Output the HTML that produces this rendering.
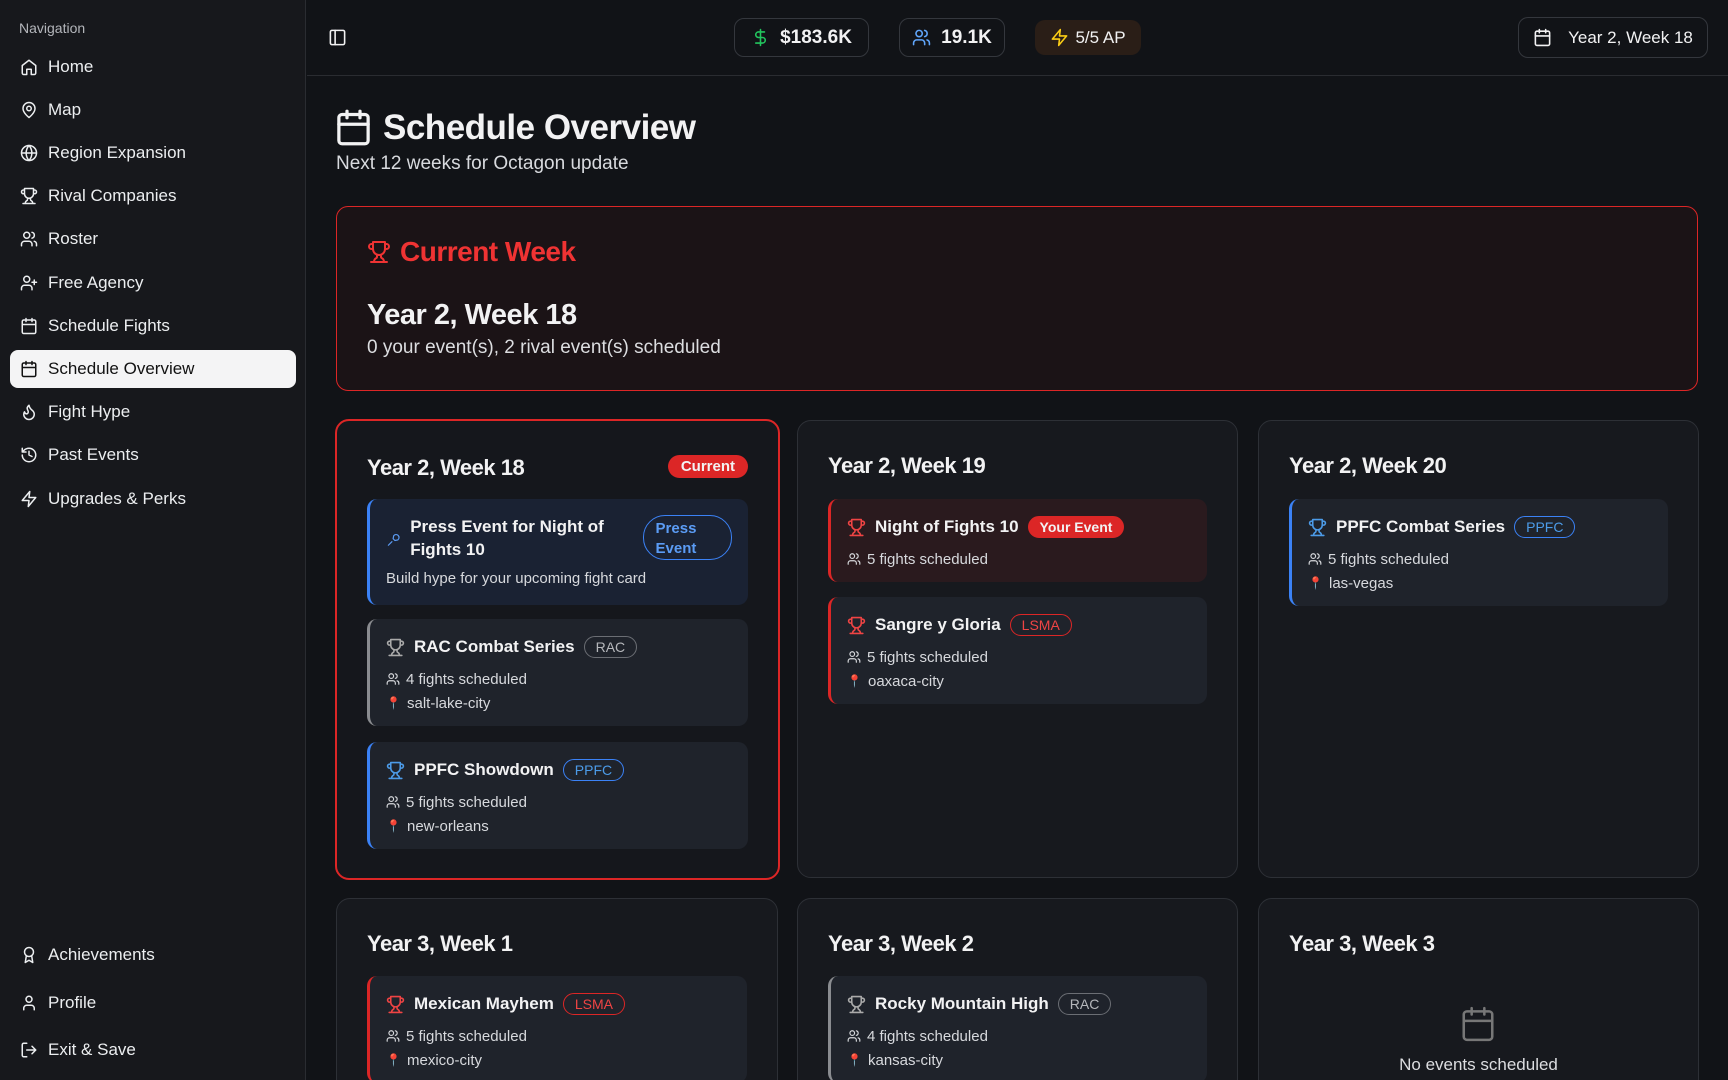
<!DOCTYPE html>
<html style="width:1728px;height:1080px;overflow:hidden"><head><meta charset="utf-8"><style>
*{box-sizing:border-box;margin:0;padding:0}
body{width:1728px;height:1080px;overflow:hidden;background:#111317;font-family:"Liberation Sans",sans-serif;color:#f2f2f3;position:relative}
svg{fill:none;stroke:currentColor;stroke-width:2;stroke-linecap:round;stroke-linejoin:round}
.side{position:absolute;left:0;top:0;width:306px;height:1080px;background:#17181c;border-right:1px solid #2a2c31}
.navlbl{position:absolute;left:19px;top:20px;font-size:14px;color:#b4b6bb}
.ni{position:absolute;left:10px;width:286px;height:38px;display:flex;align-items:center;padding-left:10px;font-size:17px;color:#eceef0}
.ni svg{width:18px;height:18px;margin-right:10px}
.ni.act{background:#f4f4f5;color:#111;border-radius:8px}
.hdr{position:absolute;left:307px;top:0;right:0;height:76px;border-bottom:1px solid #2a2c31}
.pill{position:absolute;top:18px;height:39px;border:1px solid #34373d;border-radius:10px;display:flex;align-items:center;justify-content:center;font-size:19px;font-weight:bold}
.pill svg{width:19px;height:19px;margin-right:10px}
.card{position:absolute;background:#17191e;border:1px solid #2d3036;border-radius:14px;overflow:hidden}
.card h3{position:absolute;left:30px;top:32px;font-size:22px;font-weight:bold;letter-spacing:-.5px}
.item{position:absolute;left:30px;right:30px;background:#1f232b;border-radius:10px;border-left:3px solid #888;padding:16px 16px 11px 16px}
.tr{display:flex;align-items:center;height:24px;font-size:17px;font-weight:bold}
.tr svg{width:19px;height:19px;margin-right:9px}
.b{border:1.5px solid;border-radius:14px;padding:2px 11px;font-size:14px;font-weight:normal;margin-left:9px}
.m{display:flex;align-items:center;height:24px;font-size:15px;color:#d7d9dd}
.m svg{width:14px;height:14px;margin-right:6px;stroke-width:2}
.tr+.m{margin-top:8px}
.pin{color:#e53935;font-size:12px;margin-right:7px;width:14px;text-align:center}
</style></head><body>
<div class="side">
<div class="navlbl">Navigation</div>
<div class="ni" style="top:48px"><svg viewBox="0 0 24 24"><path d="M3 10l9-7 9 7v10a2 2 0 0 1-2 2h-4v-7H9v7H5a2 2 0 0 1-2-2z"/></svg>Home</div>
<div class="ni" style="top:91px"><svg viewBox="0 0 24 24"><path d="M20 10c0 6-8 12-8 12S4 16 4 10a8 8 0 0 1 16 0z"/><circle cx="12" cy="10" r="3"/></svg>Map</div>
<div class="ni" style="top:134px"><svg viewBox="0 0 24 24"><circle cx="12" cy="12" r="10"/><path d="M2 12h20M12 2a15 15 0 0 1 0 20a15 15 0 0 1 0-20"/></svg>Region Expansion</div>
<div class="ni" style="top:177px"><svg viewBox="0 0 24 24"><path d="M6 9H4.5a2.5 2.5 0 0 1 0-5H6M18 9h1.5a2.5 2.5 0 0 0 0-5H18M4 22h16M10 14.7V17c0 .6-.5 1-1 1.2C7.9 18.8 7 20.2 7 22M14 14.7V17c0 .6.5 1 1 1.2 1.1.6 2 2 2 3.8M18 2H6v7a6 6 0 0 0 12 0z"/></svg>Rival Companies</div>
<div class="ni" style="top:220px"><svg viewBox="0 0 24 24"><path d="M16 21v-2a4 4 0 0 0-4-4H6a4 4 0 0 0-4 4v2"/><circle cx="9" cy="7" r="4"/><path d="M22 21v-2a4 4 0 0 0-3-3.9M16 3.1a4 4 0 0 1 0 7.8"/></svg>Roster</div>
<div class="ni" style="top:264px"><svg viewBox="0 0 24 24"><path d="M16 21v-2a4 4 0 0 0-4-4H6a4 4 0 0 0-4 4v2"/><circle cx="9" cy="7" r="4"/><path d="M19 8v6M22 11h-6"/></svg>Free Agency</div>
<div class="ni" style="top:307px"><svg viewBox="0 0 24 24"><rect x="3" y="4" width="18" height="18" rx="2"/><path d="M16 2v4M8 2v4M3 10h18"/></svg>Schedule Fights</div>
<div class="ni act" style="top:350px"><svg viewBox="0 0 24 24"><rect x="3" y="4" width="18" height="18" rx="2"/><path d="M16 2v4M8 2v4M3 10h18"/></svg>Schedule Overview</div>
<div class="ni" style="top:393px"><svg viewBox="0 0 24 24"><path d="M8.5 14.5A2.5 2.5 0 0 0 11 12c0-1.4-.5-2-1-3-1-2.1-.2-4.1 2-6 .5 2.5 2 4.9 4 6.5 2 1.600 3 3.5 3 5.5a7 7 0 1 1-14 0c0-1.2.4-2.3 1-3.2.4 1.6 1.2 2.7 2.5 2.7z"/></svg>Fight Hype</div>
<div class="ni" style="top:436px"><svg viewBox="0 0 24 24"><path d="M3 12a9 9 0 1 0 9-9 9.8 9.8 0 0 0-6.7 2.7L3 8M3 3v5h5M12 7v5l4 2"/></svg>Past Events</div>
<div class="ni" style="top:480px"><svg viewBox="0 0 24 24"><path d="M13 2L3 14h9l-1 8 10-12h-9z"/></svg>Upgrades &amp; Perks</div>
<div class="ni" style="top:936px"><svg viewBox="0 0 24 24"><circle cx="12" cy="8" r="6"/><path d="M15.5 12.9L17 22l-5-3-5 3 1.5-9.1"/></svg>Achievements</div>
<div class="ni" style="top:984px"><svg viewBox="0 0 24 24"><path d="M19 21v-2a4 4 0 0 0-4-4H9a4 4 0 0 0-4 4v2"/><circle cx="12" cy="7" r="4"/></svg>Profile</div>
<div class="ni" style="top:1031px"><svg viewBox="0 0 24 24"><path d="M9 21H5a2 2 0 0 1-2-2V5a2 2 0 0 1 2-2h4M16 17l5-5-5-5M21 12H9"/></svg>Exit &amp; Save</div>
</div>

<div class="hdr">
<svg viewBox="0 0 24 24" style="position:absolute;left:21px;top:28px;width:19px;height:19px"><rect x="3" y="3" width="18" height="18" rx="2"/><path d="M9 3v18"/></svg>
<div class="pill" style="left:427px;width:135px"><svg viewBox="0 0 24 24" style="color:#22c55e"><path d="M12 2v20M17 5H9.5a3.5 3.5 0 0 0 0 7h5a3.5 3.5 0 0 1 0 7H6"/></svg>$183.6K</div>
<div class="pill" style="left:592px;width:106px"><svg viewBox="0 0 24 24" style="color:#60a5fa"><path d="M16 21v-2a4 4 0 0 0-4-4H6a4 4 0 0 0-4 4v2"/><circle cx="9" cy="7" r="4"/><path d="M22 21v-2a4 4 0 0 0-3-3.9M16 3.1a4 4 0 0 1 0 7.8"/></svg>19.1K</div>
<div class="pill" style="left:728px;width:106px;border:none;background:#2a1e17;font-weight:normal;font-size:17px;height:35px;top:20px"><svg viewBox="0 0 24 24" style="color:#facc15;margin-right:6px"><path d="M13 2L3 14h9l-1 8 10-12h-9z"/></svg>5/5 AP</div>
<div class="pill" style="left:1211px;width:190px;top:17px;height:41px;font-weight:normal;font-size:17px"><svg viewBox="0 0 24 24" style="margin-right:16px"><rect x="3" y="4" width="18" height="18" rx="2"/><path d="M16 2v4M8 2v4M3 10h18"/></svg>Year 2, Week 18</div>
</div>

<svg viewBox="0 0 24 24" style="position:absolute;left:334px;top:108px;width:39px;height:39px"><rect x="3" y="4" width="18" height="18" rx="2"/><path d="M16 2v4M8 2v4M3 10h18"/></svg>
<div style="position:absolute;left:383px;top:108px;font-size:35px;font-weight:bold;letter-spacing:-.5px">Schedule Overview</div>
<div style="position:absolute;left:336px;top:153px;font-size:19px;color:#d8dade">Next 12 weeks for Octagon update</div>

<div style="position:absolute;left:336px;top:206px;width:1362px;height:185px;border:1.5px solid #dc2626;border-radius:12px;background:#1b1316">
<svg viewBox="0 0 24 24" style="position:absolute;left:30px;top:33px;width:24px;height:24px;color:#ef3333"><path d="M6 9H4.5a2.5 2.5 0 0 1 0-5H6M18 9h1.5a2.5 2.5 0 0 0 0-5H18M4 22h16M10 14.7V17c0 .6-.5 1-1 1.2C7.9 18.8 7 20.2 7 22M14 14.7V17c0 .6.5 1 1 1.2 1.1.6 2 2 2 3.8M18 2H6v7a6 6 0 0 0 12 0z"/></svg>
<div style="position:absolute;left:63px;top:29px;font-size:28px;font-weight:bold;color:#ef3333;letter-spacing:-.5px">Current Week</div>
<div style="position:absolute;left:30px;top:92px;font-size:29px;font-weight:bold;letter-spacing:-.5px">Year 2, Week 18</div>
<div style="position:absolute;left:30px;top:130px;font-size:19px;color:#dcdde0">0 your event(s), 2 rival event(s) scheduled</div>
</div>

<!-- Row 1 -->
<div class="card" style="left:335px;top:419px;width:445px;height:461px;border:2px solid #dc2626;background:#15171c">
<h3 style="left:30px;top:34px">Year 2, Week 18</h3>
<div style="position:absolute;right:30px;top:34px;background:#dc2626;border-radius:13px;padding:3px 13px;font-size:15px;font-weight:bold">Current</div>
<div class="item" style="top:78px;height:106px;border-left-color:#3b82f6;background:#1a2233">
 <div style="display:flex;align-items:flex-start">
  <svg viewBox="0 0 24 24" style="width:15px;height:15px;color:#5b9cf5;margin-top:18px;margin-right:10px"><path d="M4 20l6-6M13 4a5 5 0 1 1 7 7l-5 1-3-3z"/></svg>
  <div style="font-size:17px;font-weight:bold;line-height:23px;width:220px;margin-top:0px">Press Event for Night of Fights 10</div>
  <div style="margin-left:24px;margin-top:0px;border:1.5px solid #3b82f6;color:#5b9cf5;border-radius:22px;width:93px;height:45px;padding:3px 12px;font-size:15px;font-weight:bold;line-height:20px">Press Event</div>
 </div>
 <div style="font-size:15px;color:#d7d9dd;margin-top:9px">Build hype for your upcoming fight card</div>
</div>
<div class="item" style="top:198px;border-left-color:#8a8c90"><div class="tr"><svg viewBox="0 0 24 24" style="color:#aaa"><path d="M6 9H4.5a2.5 2.5 0 0 1 0-5H6M18 9h1.5a2.5 2.5 0 0 0 0-5H18M4 22h16M10 14.7V17c0 .6-.5 1-1 1.2C7.9 18.8 7 20.2 7 22M14 14.7V17c0 .6.5 1 1 1.2 1.1.6 2 2 2 3.8M18 2H6v7a6 6 0 0 0 12 0z"/></svg>RAC Combat Series<span class="b" style="color:#b5b7bb;border-color:#6b6e74">RAC</span></div>
<div class="m"><svg viewBox="0 0 24 24"><path d="M16 21v-2a4 4 0 0 0-4-4H6a4 4 0 0 0-4 4v2"/><circle cx="9" cy="7" r="4"/><path d="M22 21v-2a4 4 0 0 0-3-3.9M16 3.1a4 4 0 0 1 0 7.8"/></svg>4 fights scheduled</div>
<div class="m"><span class="pin">📍</span>salt-lake-city</div></div>
<div class="item" style="top:321px;border-left-color:#3b82f6"><div class="tr"><svg viewBox="0 0 24 24" style="color:#4c9be8"><path d="M6 9H4.5a2.5 2.5 0 0 1 0-5H6M18 9h1.5a2.5 2.5 0 0 0 0-5H18M4 22h16M10 14.7V17c0 .6-.5 1-1 1.2C7.9 18.8 7 20.2 7 22M14 14.7V17c0 .6.5 1 1 1.2 1.1.6 2 2 2 3.8M18 2H6v7a6 6 0 0 0 12 0z"/></svg>PPFC Showdown<span class="b" style="color:#4c9be8;border-color:#3b82f6">PPFC</span></div>
<div class="m"><svg viewBox="0 0 24 24"><path d="M16 21v-2a4 4 0 0 0-4-4H6a4 4 0 0 0-4 4v2"/><circle cx="9" cy="7" r="4"/><path d="M22 21v-2a4 4 0 0 0-3-3.9M16 3.1a4 4 0 0 1 0 7.8"/></svg>5 fights scheduled</div>
<div class="m"><span class="pin">📍</span>new-orleans</div></div>
</div>

<div class="card" style="left:797px;top:420px;width:441px;height:458px">
<h3>Year 2, Week 19</h3>
<div class="item" style="top:78px;border-left-color:#dc2626;background:#2a1a1e"><div class="tr"><svg viewBox="0 0 24 24" style="color:#ef4444"><path d="M6 9H4.5a2.5 2.5 0 0 1 0-5H6M18 9h1.5a2.5 2.5 0 0 0 0-5H18M4 22h16M10 14.7V17c0 .6-.5 1-1 1.2C7.9 18.8 7 20.2 7 22M14 14.7V17c0 .6.5 1 1 1.2 1.1.6 2 2 2 3.8M18 2H6v7a6 6 0 0 0 12 0z"/></svg>Night of Fights 10<span class="b" style="background:#dc2626;border-color:#dc2626;font-weight:bold">Your Event</span></div>
<div class="m"><svg viewBox="0 0 24 24"><path d="M16 21v-2a4 4 0 0 0-4-4H6a4 4 0 0 0-4 4v2"/><circle cx="9" cy="7" r="4"/><path d="M22 21v-2a4 4 0 0 0-3-3.9M16 3.1a4 4 0 0 1 0 7.8"/></svg>5 fights scheduled</div></div>
<div class="item" style="top:176px;border-left-color:#dc2626"><div class="tr"><svg viewBox="0 0 24 24" style="color:#ef4444"><path d="M6 9H4.5a2.5 2.5 0 0 1 0-5H6M18 9h1.5a2.5 2.5 0 0 0 0-5H18M4 22h16M10 14.7V17c0 .6-.5 1-1 1.2C7.9 18.8 7 20.2 7 22M14 14.7V17c0 .6.5 1 1 1.2 1.1.6 2 2 2 3.8M18 2H6v7a6 6 0 0 0 12 0z"/></svg>Sangre y Gloria<span class="b" style="color:#ef4444;border-color:#dc2626">LSMA</span></div>
<div class="m"><svg viewBox="0 0 24 24"><path d="M16 21v-2a4 4 0 0 0-4-4H6a4 4 0 0 0-4 4v2"/><circle cx="9" cy="7" r="4"/><path d="M22 21v-2a4 4 0 0 0-3-3.9M16 3.1a4 4 0 0 1 0 7.8"/></svg>5 fights scheduled</div>
<div class="m"><span class="pin">📍</span>oaxaca-city</div></div>
</div>

<div class="card" style="left:1258px;top:420px;width:441px;height:458px">
<h3>Year 2, Week 20</h3>
<div class="item" style="top:78px;border-left-color:#3b82f6"><div class="tr"><svg viewBox="0 0 24 24" style="color:#4c9be8"><path d="M6 9H4.5a2.5 2.5 0 0 1 0-5H6M18 9h1.5a2.5 2.5 0 0 0 0-5H18M4 22h16M10 14.7V17c0 .6-.5 1-1 1.2C7.9 18.8 7 20.2 7 22M14 14.7V17c0 .6.5 1 1 1.2 1.1.6 2 2 2 3.8M18 2H6v7a6 6 0 0 0 12 0z"/></svg>PPFC Combat Series<span class="b" style="color:#4c9be8;border-color:#3b82f6">PPFC</span></div>
<div class="m"><svg viewBox="0 0 24 24"><path d="M16 21v-2a4 4 0 0 0-4-4H6a4 4 0 0 0-4 4v2"/><circle cx="9" cy="7" r="4"/><path d="M22 21v-2a4 4 0 0 0-3-3.9M16 3.1a4 4 0 0 1 0 7.8"/></svg>5 fights scheduled</div>
<div class="m"><span class="pin">📍</span>las-vegas</div></div>
</div>

<!-- Row 2 -->
<div class="card" style="left:336px;top:898px;width:442px;height:200px">
<h3>Year 3, Week 1</h3>
<div class="item" style="top:77px;border-left-color:#dc2626"><div class="tr"><svg viewBox="0 0 24 24" style="color:#ef4444"><path d="M6 9H4.5a2.5 2.5 0 0 1 0-5H6M18 9h1.5a2.5 2.5 0 0 0 0-5H18M4 22h16M10 14.7V17c0 .6-.5 1-1 1.2C7.9 18.8 7 20.2 7 22M14 14.7V17c0 .6.5 1 1 1.2 1.1.6 2 2 2 3.8M18 2H6v7a6 6 0 0 0 12 0z"/></svg>Mexican Mayhem<span class="b" style="color:#ef4444;border-color:#dc2626">LSMA</span></div>
<div class="m"><svg viewBox="0 0 24 24"><path d="M16 21v-2a4 4 0 0 0-4-4H6a4 4 0 0 0-4 4v2"/><circle cx="9" cy="7" r="4"/><path d="M22 21v-2a4 4 0 0 0-3-3.9M16 3.1a4 4 0 0 1 0 7.8"/></svg>5 fights scheduled</div>
<div class="m"><span class="pin">📍</span>mexico-city</div></div>
</div>
<div class="card" style="left:797px;top:898px;width:441px;height:200px">
<h3>Year 3, Week 2</h3>
<div class="item" style="top:77px;border-left-color:#8a8c90"><div class="tr"><svg viewBox="0 0 24 24" style="color:#aaa"><path d="M6 9H4.5a2.5 2.5 0 0 1 0-5H6M18 9h1.5a2.5 2.5 0 0 0 0-5H18M4 22h16M10 14.7V17c0 .6-.5 1-1 1.2C7.9 18.8 7 20.2 7 22M14 14.7V17c0 .6.5 1 1 1.2 1.1.6 2 2 2 3.8M18 2H6v7a6 6 0 0 0 12 0z"/></svg>Rocky Mountain High<span class="b" style="color:#b5b7bb;border-color:#6b6e74">RAC</span></div>
<div class="m"><svg viewBox="0 0 24 24"><path d="M16 21v-2a4 4 0 0 0-4-4H6a4 4 0 0 0-4 4v2"/><circle cx="9" cy="7" r="4"/><path d="M22 21v-2a4 4 0 0 0-3-3.9M16 3.1a4 4 0 0 1 0 7.8"/></svg>4 fights scheduled</div>
<div class="m"><span class="pin">📍</span>kansas-city</div></div>
</div>
<div class="card" style="left:1258px;top:898px;width:441px;height:200px">
<h3>Year 3, Week 3</h3>
<svg viewBox="0 0 24 24" style="position:absolute;left:200px;top:106px;width:38px;height:38px;color:#777;stroke-width:1.6"><rect x="3" y="4" width="18" height="18" rx="2"/><path d="M16 2v4M8 2v4M3 10h18"/></svg>
<div style="position:absolute;left:0;right:0;top:156px;text-align:center;font-size:17px;color:#dcdde0">No events scheduled</div>
</div>
</body></html>
